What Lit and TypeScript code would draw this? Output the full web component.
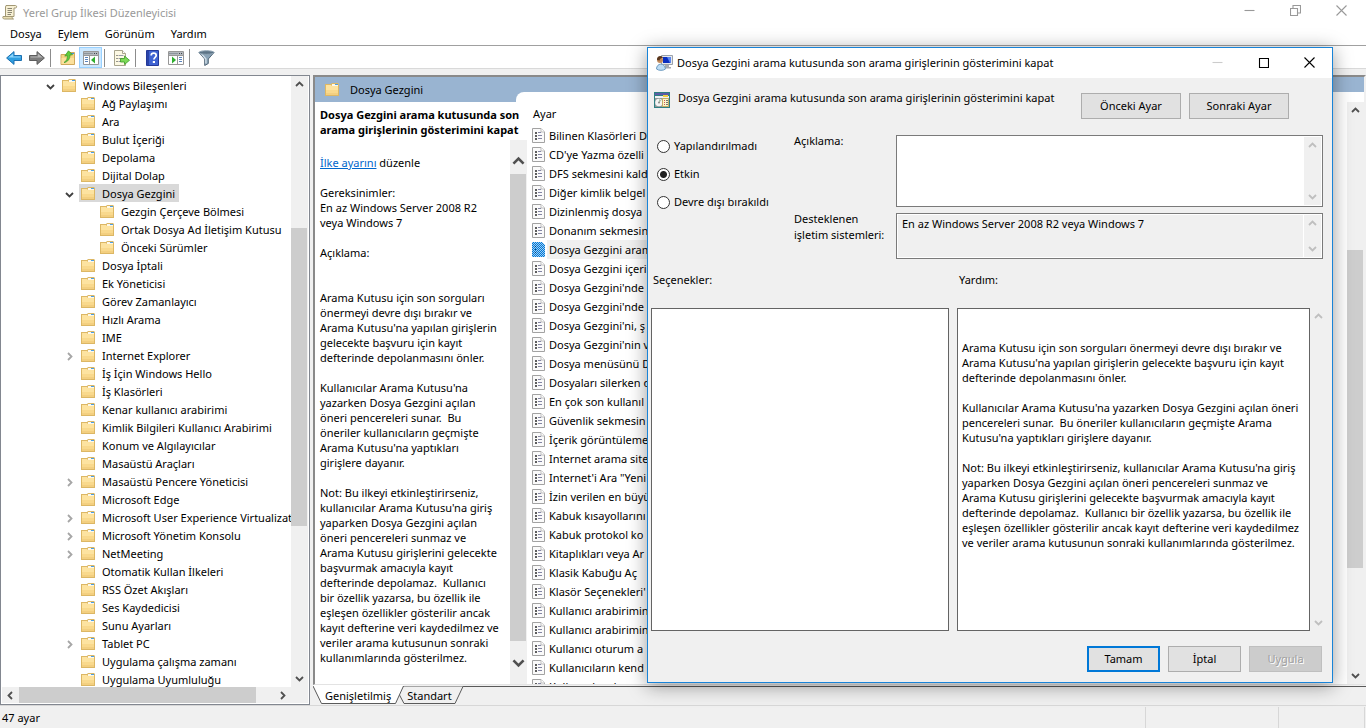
import { LitElement, html, svg, css, nothing } from "lit";
import { customElement, property, state } from "lit/decorators.js";
import { classMap } from "lit/directives/class-map.js";

type Dir = "up" | "down" | "left" | "right";

interface TreeNode {
  label: string;
  level: number;
  arrow?: "open" | "closed";
}

const TREE: TreeNode[] = [
  { label: "Windows Bileşenleri", level: 0, arrow: "open" },
  { label: "Ağ Paylaşımı", level: 1 },
  { label: "Ara", level: 1 },
  { label: "Bulut İçeriği", level: 1 },
  { label: "Depolama", level: 1 },
  { label: "Dijital Dolap", level: 1 },
  { label: "Dosya Gezgini", level: 1, arrow: "open" },
  { label: "Gezgin Çerçeve Bölmesi", level: 2 },
  { label: "Ortak Dosya Ad İletişim Kutusu", level: 2 },
  { label: "Önceki Sürümler", level: 2 },
  { label: "Dosya İptali", level: 1 },
  { label: "Ek Yöneticisi", level: 1 },
  { label: "Görev Zamanlayıcı", level: 1 },
  { label: "Hızlı Arama", level: 1 },
  { label: "IME", level: 1 },
  { label: "Internet Explorer", level: 1, arrow: "closed" },
  { label: "İş İçin Windows Hello", level: 1 },
  { label: "İş Klasörleri", level: 1 },
  { label: "Kenar kullanıcı arabirimi", level: 1 },
  { label: "Kimlik Bilgileri Kullanıcı Arabirimi", level: 1 },
  { label: "Konum ve Algılayıcılar", level: 1 },
  { label: "Masaüstü Araçları", level: 1 },
  { label: "Masaüstü Pencere Yöneticisi", level: 1, arrow: "closed" },
  { label: "Microsoft Edge", level: 1 },
  { label: "Microsoft User Experience Virtualization", level: 1, arrow: "closed" },
  { label: "Microsoft Yönetim Konsolu", level: 1, arrow: "closed" },
  { label: "NetMeeting", level: 1, arrow: "closed" },
  { label: "Otomatik Kullan İlkeleri", level: 1 },
  { label: "RSS Özet Akışları", level: 1 },
  { label: "Ses Kaydedicisi", level: 1 },
  { label: "Sunu Ayarları", level: 1 },
  { label: "Tablet PC", level: 1, arrow: "closed" },
  { label: "Uygulama çalışma zamanı", level: 1 },
  { label: "Uygulama Uyumluluğu", level: 1 },
];

const SETTINGS = [
  "Bilinen Klasörleri D",
  "CD'ye Yazma özelli",
  "DFS sekmesini kald",
  "Diğer kimlik belgel",
  "Dizinlenmiş dosya",
  "Donanım sekmesin",
  "Dosya Gezgini aram",
  "Dosya Gezgini içeri",
  "Dosya Gezgini'nde",
  "Dosya Gezgini'nde",
  "Dosya Gezgini'ni, ş",
  "Dosya Gezgini'nin v",
  "Dosya menüsünü D",
  "Dosyaları silerken o",
  "En çok son kullanıl",
  "Güvenlik sekmesin",
  "İçerik görüntüleme",
  "Internet arama site",
  "Internet'i Ara \"Yeni",
  "İzin verilen en büyü",
  "Kabuk kısayollarını",
  "Kabuk protokol ko",
  "Kitaplıkları veya Ar",
  "Klasik Kabuğu Aç",
  "Klasör Seçenekleri'",
  "Kullanıcı arabirimin",
  "Kullanıcı arabirimin",
  "Kullanıcı oturum a",
  "Kullanıcıların kend",
  "Kullanıcılara/uyg",
];
const SELECTED = 6;

const DESCRIPTION = `Gereksinimler:
En az Windows Server 2008 R2
veya Windows 7

Açıklama:


Arama Kutusu için son sorguları
önermeyi devre dışı bırakır ve
Arama Kutusu'na yapılan girişlerin
gelecekte başvuru için kayıt
defterinde depolanmasını önler.

Kullanıcılar Arama Kutusu'na
yazarken Dosya Gezgini açılan
öneri pencereleri sunar.  Bu
öneriler kullanıcıların geçmişte
Arama Kutusu'na yaptıkları
girişlere dayanır.

Not: Bu ilkeyi etkinleştirirseniz,
kullanıcılar Arama Kutusu'na giriş
yaparken Dosya Gezgini açılan
öneri pencereleri sunmaz ve
Arama Kutusu girişlerini gelecekte
başvurmak amacıyla kayıt
defterinde depolamaz.  Kullanıcı
bir özellik yazarsa, bu özellik ile
eşleşen özellikler gösterilir ancak
kayıt defterine veri kaydedilmez ve
veriler arama kutusunun sonraki
kullanımlarında gösterilmez.`;

const HELP = `Arama Kutusu için son sorguları önermeyi devre dışı bırakır ve
Arama Kutusu'na yapılan girişlerin gelecekte başvuru için kayıt
defterinde depolanmasını önler.

Kullanıcılar Arama Kutusu'na yazarken Dosya Gezgini açılan öneri
pencereleri sunar.  Bu öneriler kullanıcıların geçmişte Arama
Kutusu'na yaptıkları girişlere dayanır.

Not: Bu ilkeyi etkinleştirirseniz, kullanıcılar Arama Kutusu'na giriş
yaparken Dosya Gezgini açılan öneri pencereleri sunmaz ve
Arama Kutusu girişlerini gelecekte başvurmak amacıyla kayıt
defterinde depolamaz.  Kullanıcı bir özellik yazarsa, bu özellik ile
eşleşen özellikler gösterilir ancak kayıt defterine veri kaydedilmez
ve veriler arama kutusunun sonraki kullanımlarında gösterilmez.`;

const chevron = (dir: Dir, size = 9) => {
  const d = {
    up: "M1 6 4.5 2.5 8 6",
    down: "M1 3 4.5 6.5 8 3",
    left: "M6 1 2.5 4.5 6 8",
    right: "M3 1 6.5 4.5 3 8",
  }[dir];
  return html`<svg width=${size} height=${size} viewBox="0 0 9 9" aria-hidden="true">
    <path d=${d} fill="none" stroke="currentColor" stroke-width="1.8" />
  </svg>`;
};

const folderIcon = html`<svg width="14" height="13" viewBox="0 0 14 13" aria-hidden="true">
  <path d="M0 1h6l1-1h6l1 1v12H0z" fill="#dcb765" />
  <path d="M1 2h5l1 1h6v9H1z" fill="#fde3a0" />
  <path d="M7 1h6v2H7z" fill="#fdf8ea" />
  <path d="M10 1h3v1h-3z" fill="#4a9fe6" />
  <path d="M1 7h12v5H1z" fill="#f9d98d" />
  <path d="M1 10h12v2H1z" fill="#f3cf80" />
</svg>`;

const settingIcon = html`<svg width="13" height="15" viewBox="0 0 13 15" aria-hidden="true">
  <path d="M.5.5H9l3.500 3.500v10.500H.5z" fill="#fafafa" stroke="#a2a2a2" />
  <path d="M9 .5V4h3.500" fill="#fff" stroke="#bdbdbd" />
  <path d="M3 5h2M3 8h2M3 11h2" stroke="#2a2a2a" stroke-width="1.400" />
  <path d="M6 4.500h3M6 7.500h4M6 10.500h4" stroke="#8486a4" />
</svg>`;

const settingIconSelected = html`<svg width="13" height="15" viewBox="0 0 13 15" aria-hidden="true">
  <defs>
    <pattern id="dither" width="2" height="2" patternUnits="userSpaceOnUse">
      <rect width="2" height="2" fill="#0078d7" />
      <rect width="1" height="1" fill="#9fcdf2" />
      <rect x="1" y="1" width="1" height="1" fill="#9fcdf2" />
    </pattern>
  </defs>
  <path d="M0 0h10l3 3v12H0z" fill="url(#dither)" />
  <path d="M3 4.500h1M3 7.500h1M3 10.500h1" stroke="#00457c" />
</svg>`;

const scrollIcon = html`<svg width="16" height="16" viewBox="0 0 16 16" aria-hidden="true">
  <path d="M4 1.500h9.500c1.500 0 1.500 2.500 0 2.500H12v8.500H3.500V3z" fill="#f7f0d4" stroke="#a29874" />
  <path d="M1 12.500h9.500c-.8 1 0 2.500 1 2.500h-9C.8 15 .5 13.500 1 12.500z" fill="#eadfb4" stroke="#a29874" />
  <path d="M5.500 4.500H10M5.500 6.500H10M5.500 8.500H10M5.500 10.500H9" stroke="#8a8673" />
</svg>`;

const toolArrow = (fill: string, light: string, stroke: string, flip: boolean) => html`<svg
  width="16" height="16" viewBox="0 0 16 16" aria-hidden="true">
  <g transform=${flip ? "matrix(-1 0 0 1 16 0)" : "matrix(1 0 0 1 0 0)"}>
    <path d="M.6 8 8 1.600v3.900h7.500v5H8v3.900z" fill=${fill} stroke=${stroke} />
    <path d="M2.300 7.600 7.200 3.400v3h7.300v1.200z" fill=${light} />
  </g>
</svg>`;

const upFolderIcon = html`<svg width="16" height="16" viewBox="0 0 16 16" aria-hidden="true">
  <path d="M1 4.500h6l1-2h6.500v12H1z" fill="#f5d483" stroke="#cfa95c" />
  <path d="M11 3.500h3" stroke="#3d95e0" />
  <path d="M1.500 8h12.500v6H1.500z" fill="#fbe09c" />
  <path d="M4 12.500C7 11 7.500 8 7.300 5.500l-2.500.6L8.500.8l4 4-2.600.2c.2 3.500-1.900 7-5.900 7.500z" fill="#5fce3c" stroke="#3f9a2c" stroke-width=".8" />
</svg>`;

const panelIcon = (right: boolean) => html`<svg width="16" height="14" viewBox="0 0 16 14" aria-hidden="true">
  <path d="M.5.5h15v13H.5z" fill="#fff" stroke="#979797" />
  <path d="M1 1h14v3H1z" fill="#b4b9be" />
  <path d="M1 2.500h9" stroke="#8d949b" />
  <path d="M11 2.500h1M13 2.500h1" stroke="#40454b" />
  <path d="M1 4.500h14" stroke="#979797" />
  ${right
    ? svg`<path d="M9.500 5v8" stroke="#979797" /><path d="M4 5.500l4 3.500-4 3.500z" fill="#2fae2f" /><path d="M11 6.500h3M11 8.500h3M11 10.500h3" stroke="#5a84bd" />`
    : svg`<path d="M6.500 5v8" stroke="#979797" /><path d="M12 5.500l-4 3.500 4 3.500z" fill="#2fae2f" /><path d="M2 6.500h3M2 8.500h3M2 10.500h3" stroke="#5a84bd" />`}
</svg>`;

const exportIcon = html`<svg width="16" height="16" viewBox="0 0 16 16" aria-hidden="true">
  <path d="M.5.500h8l3 3v12H.5z" fill="#fdf9e4" stroke="#a8a48d" />
  <path d="M8.500.500v3h3" fill="#fff" stroke="#a8a48d" />
  <path d="M2.500 5.500h1M2.500 8.500h1M2.500 11.500h1" stroke="#333" />
  <path d="M4.500 5.500h5M4.500 8.500h4M4.500 11.500h4" stroke="#989cab" />
  <path d="M6.500 8.500h4V6l5 4.300-5 4.200v-2.500h-4z" fill="#7cd957" stroke="#3b9a24" stroke-width=".8" />
</svg>`;

const helpIcon = html`<svg width="13" height="16" viewBox="0 0 13 16" aria-hidden="true">
  <path d="M.5.500h12v15H.5z" fill="#3f63d2" stroke="#24399a" />
  <path d="M1 1h2v14H1z" fill="#2a44a8" />
  <path d="M5.200 5.400c0-3 5-3 5 0 0 2-2.300 1.800-2.300 4.200" fill="none" stroke="#fff" stroke-width="1.700" />
  <path d="M6.800 11H9v2H6.800z" fill="#fff" />
</svg>`;

const filterIcon = html`<svg width="17" height="16" viewBox="0 0 17 16" aria-hidden="true">
  <path d="M1 2.500 6.700 9v6.500l3.600-2V9L16 2.500z" fill="#8ba4b8" stroke="#54697a" />
  <path d="M3.500 3.800 7.900 9v4.500" fill="none" stroke="#d7e3ec" stroke-width="1.300" />
  <ellipse cx="8.500" cy="2.500" rx="7.500" ry="1.800" fill="#5d7487" stroke="#8fa4b4" />
</svg>`;

const dialogIcon = html`<svg width="17" height="16" viewBox="0 0 17 16" aria-hidden="true">
  <path d="M5.500.500h11v9h-11z" fill="#e7e9ec" stroke="#9aa1aa" />
  <path d="M7 2h8v6H7z" fill="#0a2fc0" />
  <path d="M11 2h4v6h-1z" fill="#5b86ee" />
  <path d="M9 10h4v2h2v1.500H8z" fill="#a6abb2" />
  <circle cx="4" cy="5" r="3" fill="#c28a5c" />
  <path d="M1 5c-.5-5 5.500-5 6-2-2 0-3 .5-3.500 2.500z" fill="#5a371d" />
  <path d="M.500 14c0-6 8-7 9 0-2 1.800-7 1.800-9 0z" fill="#bcdcf5" stroke="#6f9cc0" />
</svg>`;

const policyIcon = html`<svg width="16" height="16" viewBox="0 0 16 16" aria-hidden="true">
  <path d="M0 0h16v16H0z" fill="#2e7f83" />
  <path d="M1 1h14v2H1z" fill="#5c5ca6" />
  <path d="M1 4h14v2H1z" fill="#f2f2f2" />
  <path d="M9 3h5v2H9z" fill="#f0d040" />
  <path d="M1 6h14v9H1z" fill="#8f9898" />
  <circle cx="5" cy="10.500" r="3.800" fill="#f4f4f4" />
  <path d="M5 7v3.500l2.500-2z" fill="#a8c8a8" />
  <circle cx="5" cy="10.500" r="1" fill="#888" />
  <path d="M8.500 6.500h6v8h-6z" fill="#fdf6c8" stroke="#c4ad64" />
  <path d="M10 8.500h1M10 10.500h1M10 12.500h1" stroke="#c55" />
  <path d="M12 8.500h2M12 10.500h2M12 12.500h2" stroke="#777" />
</svg>`;

const caption = (kind: "min" | "max" | "restore" | "close") => {
  const d = {
    min: "M.5 5.500h10",
    max: "M1.500 1.500h9v9h-9z",
    restore: "M.5 3.500h7v7h-7zM3 3V.5h7.500V8H8",
    close: "M.5.5l10 10M10.500.5l-10 10",
  }[kind];
  return html`<svg width="11" height="11" viewBox="0 0 11 11" aria-hidden="true">
    <path d=${d} fill="none" stroke="currentColor" stroke-width="1.1" />
  </svg>`;
};

const base = css`
  * {
    box-sizing: border-box;
  }
  button,
  textarea,
  input {
    font: inherit;
    color: inherit;
    margin: 0;
  }
  svg {
    display: block;
    flex: none;
  }
`;

@customElement("scroll-track")
export class ScrollTrack extends LitElement {
  @property() axis: "x" | "y" = "y";
  @property({ type: Array }) parts: number[] = [];
  @property({ type: Boolean, reflect: true }) large = false;

  static styles = [
    base,
    css`
      :host {
        display: block;
        flex: none;
        width: 17px;
        background: #f0f0f0;
        color: #505050;
      }
      :host([axis="x"]) {
        width: auto;
        height: 16px;
      }
      :host([disabled]) {
        color: #bfbfbf;
      }
      .track {
        display: flex;
        flex-direction: column;
        width: 100%;
        height: 100%;
      }
      .track.x {
        flex-direction: row;
      }
      .end {
        display: flex;
        align-items: center;
        justify-content: center;
        flex: none;
        height: 17px;
        padding: 0;
        border: 0;
        background: none;
      }
      .x .end {
        width: 17px;
        height: 100%;
      }
      :host([large]) .end {
        height: 34px;
        padding-top: 8px;
      }
      :host([large]) .end:last-child {
        padding: 0 0 10px;
      }
      .thumb {
        background: #cdcdcd;
        margin-right: 1px;
      }
      .x .thumb {
        margin: 0;
      }
    `,
  ];

  render() {
    const x = this.axis === "x";
    const size = this.large ? 13 : 9;
    const [before = 1, thumb = 0, after = 0] = this.parts;
    return html`<div class=${classMap({ track: true, x })}>
      <button class="end" tabindex="-1" aria-label=${x ? "Sola kaydır" : "Yukarı kaydır"}>
        ${chevron(x ? "left" : "up", size)}
      </button>
      <div style="flex:${before}"></div>
      ${thumb ? html`<div class="thumb" style="flex:${thumb}"></div>` : nothing}
      ${thumb ? html`<div style="flex:${after}"></div>` : nothing}
      <button class="end" tabindex="-1" aria-label=${x ? "Sağa kaydır" : "Aşağı kaydır"}>
        ${chevron(x ? "right" : "down", size)}
      </button>
    </div>`;
  }
}

@customElement("policy-dialog")
export class PolicyDialog extends LitElement {
  @state() private choice = "Etkin";

  static styles = [
    base,
    css`
      :host {
        display: block;
        background: #f0f0f0;
        border: 1px solid #1883d7;
        box-shadow: 0 3px 18px rgba(0, 0, 0, 0.4);
        line-height: 16px;
      }
      .title {
        display: flex;
        align-items: center;
        height: 30px;
        padding-left: 8px;
        gap: 4px;
        background: #fff;
      }
      .title h1 {
        flex: 1;
        margin: 0;
        font-size: inherit;
        font-weight: 400;
      }
      .caps {
        display: flex;
        height: 100%;
      }
      .cap {
        display: flex;
        align-items: center;
        justify-content: center;
        width: 46px;
        padding: 0 0 2px;
        border: 0;
        background: none;
      }
      .cap:disabled {
        color: #ccc;
      }
      .head {
        display: flex;
        gap: 8px;
        padding: 12px 43px 0 6px;
      }
      .head h2 {
        flex: 1;
        margin: 0;
        font-size: inherit;
        font-weight: 400;
        white-space: nowrap;
      }
      .head svg {
        margin-top: 2px;
      }
      .head .btn {
        width: 100px;
        margin-top: 3px;
      }
      .btn {
        height: 26px;
        padding: 0;
        border: 1px solid #adadad;
        background: #e1e1e1;
      }
      .btn.primary {
        border: 2px solid #0078d7;
      }
      .btn:disabled {
        background: #ccc;
        border-color: #bfbfbf;
        color: #a0a0a0;
        text-shadow: 1px 1px 0 #fff;
      }
      .form {
        display: grid;
        grid-template-columns: 140px 102px 1fr;
        padding: 14px 9px 0 6px;
      }
      .radios {
        grid-row: span 2;
        display: flex;
        flex-direction: column;
        gap: 6px;
        margin: 0;
        padding: 2px 0 0 3px;
        border: 0;
      }
      .radio {
        display: flex;
        align-items: center;
        gap: 4px;
        height: 22px;
      }
      .radio input {
        appearance: none;
        width: 13px;
        height: 13px;
        border: 1px solid #333;
        border-radius: 50%;
        background: #fff;
      }
      .radio input:checked {
        background: radial-gradient(circle, #222 0 3px, #fff 4px);
      }
      .field {
        display: flex;
        margin: 2px 0 4px;
        padding: 1px;
        height: 72px;
        border: 1px solid #7a7a7a;
        background: #fff;
      }
      .field.short {
        height: 46px;
        margin-bottom: 0;
      }
      .field textarea {
        flex: 1;
        min-width: 0;
        padding: 1px 4px;
        border: 0;
        background: #fff;
        resize: none;
        outline: 0;
        overflow: hidden;
      }
      .field.short textarea {
        background: #f0f0f0;
        margin-right: 1px;
      }
      .lists {
        display: grid;
        grid-template-columns: 298fr 370fr;
        column-gap: 8px;
        row-gap: 20px;
        padding: 13px 5px 0 3px;
      }
      .lists h3 {
        margin: 0;
        padding-left: 2px;
        font-size: inherit;
        font-weight: 400;
      }
      .help-row {
        display: flex;
        min-width: 0;
      }
      .box {
        height: 323px;
        border: 1px solid #646464;
        background: #fff;
      }
      .help {
        flex: 1;
        min-width: 0;
        margin: 0;
        padding: 31px 4px 0;
        font: inherit;
        line-height: 15px;
        white-space: pre;
        overflow: hidden;
      }
      .actions {
        display: flex;
        justify-content: flex-end;
        gap: 8px;
        padding: 15px 10px 10px;
      }
      .actions .btn {
        width: 73px;
      }
    `,
  ];

  render() {
    const name = "Dosya Gezgini arama kutusunda son arama girişlerinin gösterimini kapat";
    return html`
      <header class="title">
        ${dialogIcon}
        <h1>${name}</h1>
        <div class="caps">
          <button class="cap" disabled aria-label="Simge durumuna küçült">${caption("min")}</button>
          <button class="cap" aria-label="Ekranı kapla">${caption("max")}</button>
          <button class="cap" aria-label="Kapat">${caption("close")}</button>
        </div>
      </header>
      <div class="head">
        ${policyIcon}
        <h2>${name}</h2>
        <button class="btn">Önceki Ayar</button>
        <button class="btn">Sonraki Ayar</button>
      </div>
      <div class="form">
        <fieldset class="radios">
          ${["Yapılandırılmadı", "Etkin", "Devre dışı bırakıldı"].map(
            (c) => html`<label class="radio">
              <input type="radio" name="state" .checked=${this.choice === c} @change=${() => (this.choice = c)} />
              ${c}
            </label>`
          )}
        </fieldset>
        <label for="comment">Açıklama:</label>
        <div class="field">
          <textarea id="comment"></textarea>
          <scroll-track disabled></scroll-track>
        </div>
        <label for="supported">Desteklenen<br />işletim sistemleri:</label>
        <div class="field short">
          <textarea id="supported" readonly .value=${"En az Windows Server 2008 R2 veya Windows 7"}></textarea>
          <scroll-track disabled></scroll-track>
        </div>
      </div>
      <div class="lists">
        <h3>Seçenekler:</h3>
        <h3>Yardım:</h3>
        <div class="box"></div>
        <div class="help-row">
          <pre class="box help">${HELP}</pre>
          <scroll-track disabled></scroll-track>
        </div>
      </div>
      <div class="actions">
        <button class="btn primary">Tamam</button>
        <button class="btn">İptal</button>
        <button class="btn" disabled>Uygula</button>
      </div>
    `;
  }
}

@customElement("app-root")
export class AppRoot extends LitElement {
  static styles = [
    base,
    css`
      :host {
        display: flex;
        flex-direction: column;
        position: relative;
        height: 100vh;
        overflow: hidden;
        background: #f0f0f0;
        color: #000;
        font: 11px/15px "Noto Sans", "Open Sans", sans-serif;
      }
      .titlebar {
        display: flex;
        align-items: center;
        gap: 5px;
        height: 24px;
        padding: 0 2px;
        background: #fff;
        color: #999;
      }
      .titlebar h1 {
        flex: 1;
        margin: 0;
        font-size: inherit;
        font-weight: 400;
      }
      .caps {
        display: flex;
        align-self: flex-start;
      }
      .cap {
        display: flex;
        justify-content: center;
        width: 46px;
        height: 20px;
        padding: 5px 0 0;
        border: 0;
        background: none;
      }
      .menu {
        display: flex;
        height: 22px;
        padding-left: 2px;
        background: #fff;
        border-bottom: 1px solid #a0a0a0;
      }
      .menu button {
        padding: 0 8px 2px;
        border: 0;
        background: none;
      }
      .toolbar {
        display: flex;
        align-items: flex-end;
        height: 23px;
        padding-left: 2px;
        background: #fff;
        border-bottom: 1px solid #d9d9d9;
      }
      .tool {
        display: flex;
        align-items: center;
        justify-content: center;
        width: 23px;
        height: 21px;
        padding: 0;
        border: 1px solid transparent;
        background: none;
      }
      .tool.on {
        border-color: #99d1ff;
        background: #cce8ff;
      }
      .sep {
        width: 1px;
        height: 18px;
        margin: 0 5px 1px 2px;
        background: #8c8c8c;
      }
      .main {
        display: flex;
        flex: 1;
        min-height: 0;
        gap: 3px;
        padding-top: 6px;
      }
      .tree-pane {
        display: flex;
        flex-direction: column;
        flex: none;
        width: 310px;
        padding: 0 1px 1px;
        border: 1px solid #828790;
        background: #fff;
      }
      .tree-row {
        display: flex;
        flex: 1;
        min-height: 0;
      }
      .tree {
        flex: 1;
        min-width: 0;
        margin: 0;
        padding: 0 0 0 41px;
        list-style: none;
        overflow: hidden;
      }
      .node {
        display: flex;
        align-items: center;
        height: 18px;
        white-space: nowrap;
      }
      .twist {
        display: flex;
        justify-content: center;
        flex: none;
        width: 17px;
        padding: 2px 2px 0 0;
        color: #404040;
      }
      .twist.closed {
        color: #a6a6a6;
      }
      .label {
        display: flex;
        align-items: center;
        gap: 7px;
        height: 18px;
        padding: 0 4px 0 2px;
      }
      .label.selected {
        background: #d9d9d9;
      }
      .tree-foot {
        display: flex;
        background: #f0f0f0;
        padding-right: 17px;
      }
      .tree-foot scroll-track {
        flex: 1;
      }
      .content {
        display: flex;
        flex-direction: column;
        flex: 1;
        min-width: 0;
      }
      .detail {
        display: flex;
        flex-direction: column;
        flex: 1;
        min-height: 0;
        border: 2px solid #8a8a8a;
        border-right-color: #f0f0f0;
        border-bottom: 1px solid #e3e3e3;
        background: #fff;
      }
      .band {
        display: flex;
        height: 25px;
        background: #99b4d1;
      }
      .band-title {
        display: flex;
        align-items: center;
        gap: 11px;
        flex: none;
        width: 201px;
        padding-left: 10px;
        margin: 0;
        font-size: inherit;
        font-weight: 400;
      }
      .band-tab {
        flex: 1;
        align-self: flex-end;
        height: 10px;
        background: #fff;
        border-top-left-radius: 8px;
      }
      .panes {
        display: flex;
        flex: 1;
        min-height: 0;
      }
      .info {
        display: flex;
        flex-direction: column;
        flex: none;
        width: 212px;
      }
      .info h3 {
        margin: 0;
        padding: 5px 0 3px 5px;
        font-size: inherit;
        white-space: nowrap;
      }
      .info-body {
        display: flex;
        flex: 1;
        min-height: 0;
      }
      .info-text {
        flex: 1;
        min-width: 0;
        padding: 15px 0 0 5px;
        overflow: hidden;
      }
      .info-text p,
      .info-text pre {
        margin: 0 0 15px;
        font: inherit;
        white-space: pre;
      }
      .info-text a {
        color: #0066cc;
      }
      .list {
        flex: 1;
        min-width: 0;
        overflow: hidden;
      }
      .settings {
        width: 100%;
        border-spacing: 0;
        table-layout: fixed;
      }
      .settings th {
        height: 24px;
        padding: 0 6px 2px;
        font-weight: 400;
        text-align: left;
      }
      .settings td {
        padding: 0 0 0 5px;
      }
      .setting {
        display: flex;
        align-items: center;
        gap: 2px;
        height: 19px;
        white-space: nowrap;
      }
      .setting span {
        padding: 0 4px 0 2px;
        line-height: 19px;
      }
      .setting.selected span {
        background: #f0f0f0;
      }
      .tabs {
        position: relative;
        display: flex;
        height: 20px;
        padding-left: 7px;
      }
      .tabs svg {
        position: absolute;
        left: 0;
        top: 0;
      }
      .tabs::before {
        content: "";
        position: absolute;
        inset: 1px 0 auto 90px;
        border-top: 1px solid #5a5a5a;
      }
      .tab {
        position: relative;
        padding: 1px 5px 0;
        border: 0;
        background: none;
      }
      .tab + .tab {
        margin-left: 6px;
      }
      .status {
        display: flex;
        height: 23px;
        padding-right: 1px;
        border-top: 1px solid #d7d7d7;
      }
      .status div {
        margin-top: 1px;
        border-right: 1px solid #d7d7d7;
        width: 133px;
      }
      .status div:first-child {
        flex: 1;
        padding: 3px 2px;
      }
      .status div:last-child {
        width: 86px;
      }
      policy-dialog {
        position: absolute;
        top: 47px;
        right: 33px;
        width: 686px;
      }
    `,
  ];

  private tool(label: string, icon: unknown, on = false) {
    return html`<button class=${classMap({ tool: true, on })} aria-label=${label}>${icon}</button>`;
  }

  render() {
    return html`
      <header class="titlebar">
        ${scrollIcon}
        <h1>Yerel Grup İlkesi Düzenleyicisi</h1>
        <div class="caps">
          <button class="cap" aria-label="Simge durumuna küçült">${caption("min")}</button>
          <button class="cap" aria-label="Önceki boyut">${caption("restore")}</button>
          <button class="cap" aria-label="Kapat">${caption("close")}</button>
        </div>
      </header>
      <nav class="menu">
        ${["Dosya", "Eylem", "Görünüm", "Yardım"].map((m) => html`<button>${m}</button>`)}
      </nav>
      <div class="toolbar">
        ${this.tool("Geri", toolArrow("#2f9fe0", "#8fd6fb", "#1c6fb0", false))}
        ${this.tool("İleri", toolArrow("#7d7d7d", "#b5b5b5", "#5c5c5c", true))}
        <span class="sep"></span>
        ${this.tool("Yukarı", upFolderIcon)} ${this.tool("Konsol ağacı", panelIcon(false), true)}
        <span class="sep"></span>
        ${this.tool("Listeyi ver", exportIcon)}
        <span class="sep"></span>
        ${this.tool("Yardım", helpIcon)} ${this.tool("Eylem bölmesi", panelIcon(true))}
        <span class="sep"></span>
        ${this.tool("Süz", filterIcon)}
      </div>
      <main class="main">
        <section class="tree-pane">
          <div class="tree-row">
            <ul class="tree" role="tree">
              ${TREE.map(
                (n) => html`<li class="node" role="treeitem" style="padding-left:${n.level * 19}px">
                  <span class="twist ${n.arrow ?? ""}">
                    ${n.arrow ? chevron(n.arrow === "open" ? "down" : "right") : nothing}
                  </span>
                  <span class=${classMap({ label: true, selected: n.label === "Dosya Gezgini" })}>
                    ${folderIcon}${n.label}
                  </span>
                </li>`
              )}
            </ul>
            <scroll-track .parts=${[135, 296, 144]}></scroll-track>
          </div>
          <div class="tree-foot">
            <scroll-track axis="x" .parts=${[0, 238, 18]}></scroll-track>
          </div>
        </section>
        <section class="content">
          <div class="detail">
            <div class="band">
              <h2 class="band-title">${folderIcon}Dosya Gezgini</h2>
              <div class="band-tab"></div>
            </div>
            <div class="panes">
              <div class="info">
                <h3>Dosya Gezgini arama kutusunda son<br />arama girişlerinin gösterimini kapat</h3>
                <div class="info-body">
                  <div class="info-text">
                    <p><a href="#">İlke ayarını</a> düzenle</p>
                    <pre>${DESCRIPTION}</pre>
                  </div>
                  <scroll-track large .parts=${[0, 467, 9]}></scroll-track>
                </div>
              </div>
              <div class="list">
                <table class="settings">
                  <thead>
                    <tr><th>Ayar</th></tr>
                  </thead>
                  <tbody>
                    ${SETTINGS.map(
                      (s, i) => html`<tr><td>
                        <div class=${classMap({ setting: true, selected: i === SELECTED })}>
                          ${i === SELECTED ? settingIconSelected : settingIcon}<span>${s}</span>
                        </div>
                      </td></tr>`
                    )}
                  </tbody>
                </table>
              </div>
              <scroll-track .parts=${[131, 318, 99]}></scroll-track>
            </div>
          </div>
          <div class="tabs">
            <svg width="152" height="20" viewBox="0 0 152 20" aria-hidden="true">
              <path d="M91 1.500H150L142 18.500H91L86.500 9z" fill="#f0f0f0" />
              <path d="M150 1.500 142 18.500H91L86.500 10" fill="none" stroke="#5a5a5a" />
              <path d="M0 0H91L82.500 18.500H8.500z" fill="#fff" />
              <path d="M0 1 8.500 18.500H82.500L90.500 1" fill="none" stroke="#5a5a5a" />
            </svg>
            <button class="tab">Genişletilmiş</button>
            <button class="tab">Standart</button>
          </div>
        </section>
      </main>
      <footer class="status">
        <div>47 ayar</div>
        <div></div>
        <div></div>
      </footer>
      <policy-dialog role="dialog" aria-label="İlke ayarı"></policy-dialog>
    `;
  }
}
